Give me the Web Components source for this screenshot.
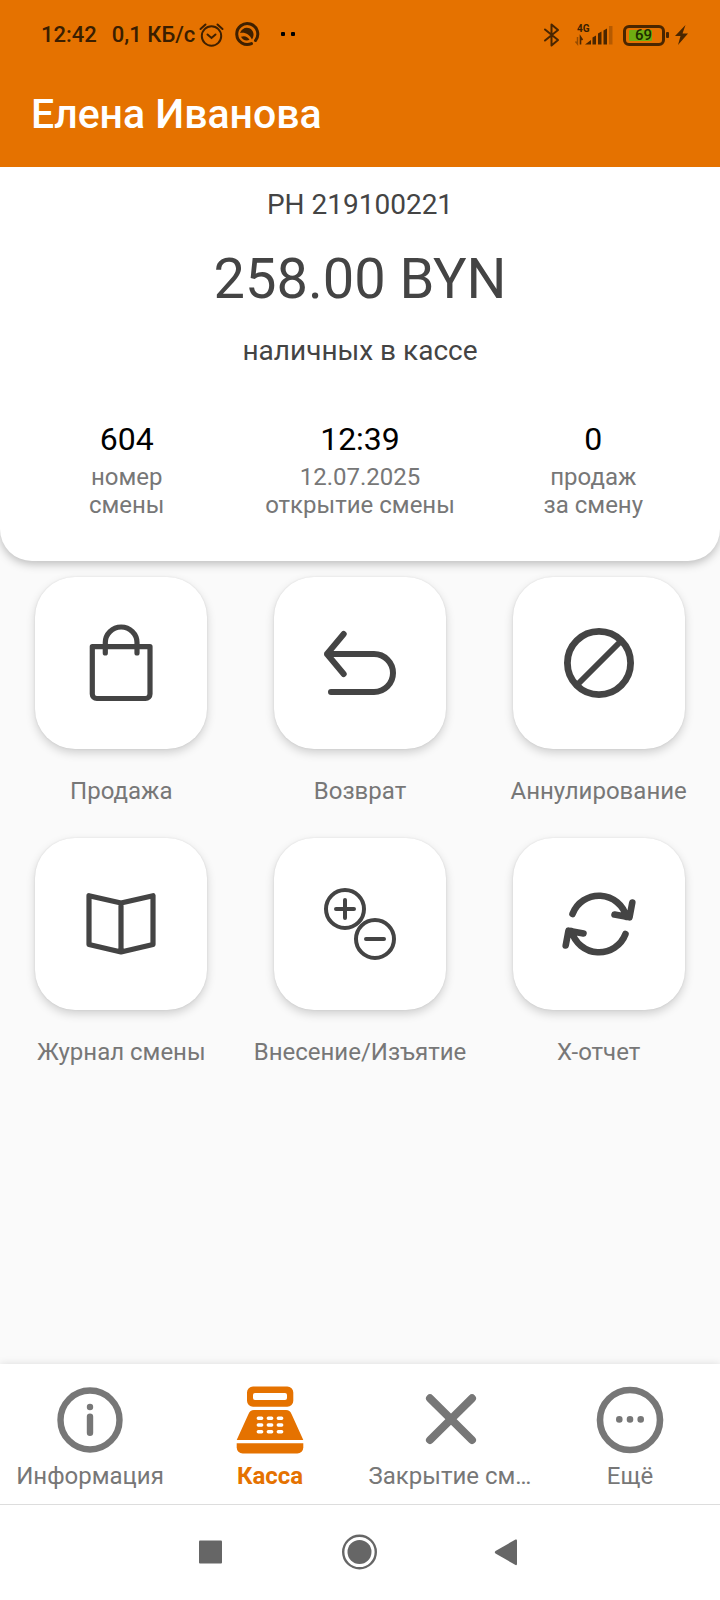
<!DOCTYPE html>
<html lang="ru">
<head>
<meta charset="utf-8">
<meta name="viewport" content="width=device-width, initial-scale=1">
<title>Касса</title>
<style>
  body { margin: 0; font-family: Roboto, "Noto Sans", sans-serif; background: #fafafa; color: #444; }
</style>
</head>
<body>
<cash-app></cash-app>
<script>
const define = (name, html) => {
  const template = document.createElement('template');
  template.innerHTML = html;
  customElements.define(name, class extends HTMLElement {
    constructor() {
      super();
      this.attachShadow({ mode: 'open' }).append(template.content.cloneNode(true));
    }
  });
};

define('status-bar', `
  <style>
    :host { display: flex; align-items: center; justify-content: space-between; height: 70px; padding: 0 32px 0 41px; box-sizing: border-box; color: #3a1e00; font-size: 22px; line-height: 26px; font-weight: 500; }
    .side { display: flex; align-items: center; }
    .rate { margin-left: 15px; }
    svg { display: block; flex: none; }
    .signal { display: flex; flex-direction: column; margin: 0 10px 0 14px; }
    .signal span { font-size: 10px; line-height: 10px; font-weight: 700; padding-left: 2px; }
    .battery { display: flex; align-items: center; }
    .cell { box-sizing: border-box; width: 42px; height: 21px; border: 3px solid #4a2600; border-radius: 6px; padding: 2px 10px 2px 3px; display: flex; }
    .level { flex: 1; background: #6fae12; color: #1c2c00; font-size: 15px; line-height: 11px; text-align: right; font-weight: 500; border-radius: 1px; }
    .tip { width: 3px; height: 6px; border-radius: 1px; background: #4a2600; margin: 0 6px 0 1px; }
  </style>
  <div class="side">
    <span>12:42</span><span class="rate">0,1 КБ/с</span>
    <svg width="104" height="30" viewBox="196 20 104 30" fill="none" stroke="#3f2000" stroke-width="2" stroke-linecap="round">
      <circle cx="212.500" cy="36" r="9.700"/>
      <path d="M208.500 34.500l4 3.500 4-3.500M201.500 29l5-4.500M223.500 29l-5-4.500"/>
      <path d="M256.500 40.500A10.500 10.500 0 1 0 252.500 43.600" stroke-width="3"/>
      <g fill="#3f2000" stroke="none">
        <path d="M241 33C242.500 28.500 247 26.500 250.500 28.300C254.500 30.300 256 35 253 39.500C250.500 34.500 246.500 32 241 33Z"/>
        <path d="M242 36.800C245.500 35.300 248.500 36.500 250.500 39.800C247 41.300 243.500 40 242 36.800Z"/>
      </g>
      <g fill="#000" stroke="none"><rect x="282" y="32" width="4" height="4" rx="1"/><rect x="292" y="32" width="4" height="4" rx="1"/></g>
    </svg>
  </div>
  <div class="side">
    <svg width="18" height="26" viewBox="0 0 18 26" fill="none" stroke="#4a2600" stroke-width="2" stroke-linecap="round" stroke-linejoin="round"><path d="M2 7.500L15 18 8.500 23.500V2.500L15 8 2 18.500"/></svg>
    <div class="signal"><span>4G</span>
      <svg width="38" height="12" viewBox="0 0 38 12" overflow="visible" fill="#4a2600"><path d="M10 10.500L16 6V10.500ZM17.500 10.500V3.500L21 1.500V10.500ZM23 10.500V-0.500L26.500-2.500V10.500ZM28.500 10.500V-3.500L32-5.500V10.500Z"/><path d="M34-8h3.500v18.500H34z" opacity=".3"/><path d="M2.500 3v7L0.500 7.500" fill="none" stroke="#4a2600" stroke-opacity=".5" stroke-width="1.400"/><path d="M5.500 10.500V3l2 3" fill="none" stroke="#4a2600" stroke-width="1.600"/></svg>
    </div>
    <div class="battery"><div class="cell"><span class="level">69</span></div><div class="tip"></div></div>
    <svg width="13" height="20" viewBox="0 0 13 20" fill="#4a2600"><path d="M10.500 0L0 11h5.500L3 20 13 8.500H7.500z"/></svg>
  </div>
`);

define('app-header', `
  <style>
    :host { display: block; background: #e57200; color: #fff; }
    h1 { margin: 0; padding: 20px 31px 29px; font-size: 41px; line-height: 48px; font-weight: 500; }
  </style>
  <status-bar></status-bar>
  <h1><slot></slot></h1>
`);

define('shift-stat', `
  <style>
    :host { display: block; text-align: center; color: #777; font-size: 24px; line-height: 28px; }
    .value { color: #000; font-size: 32px; line-height: 38px; margin-bottom: 5px; }
  </style>
  <div class="value"><slot name="value"></slot></div>
  <slot></slot>
`);

define('cash-summary', `
  <style>
    :host { display: block; background: #fff; border-radius: 0 0 32px 32px; box-shadow: 0 3px 10px rgba(0,0,0,.25); padding: 22px 10px 42px; text-align: center; font-size: 28px; line-height: 32px; }
    .amount { font-size: 56px; line-height: 64px; margin: 26px 0 24px; }
    .stats { display: grid; grid-template-columns: repeat(3, 1fr); margin-top: 53px; }
  </style>
  <div>РН 219100221</div>
  <div class="amount">258.00 BYN</div>
  <div>наличных в кассе</div>
  <div class="stats">
    <shift-stat><span slot="value">604</span>номер<br>смены</shift-stat>
    <shift-stat><span slot="value">12:39</span>12.07.2025<br>открытие смены</shift-stat>
    <shift-stat><span slot="value">0</span>продаж<br>за смену</shift-stat>
  </div>
`);

define('action-tile', `
  <style>
    :host { display: block; }
    button { display: flex; flex-direction: column; align-items: center; gap: 28px; width: 100%; padding: 0; border: 0; background: none; color: #777; font: inherit; font-size: 24px; line-height: 28px; white-space: nowrap; cursor: pointer; }
    .tile { display: flex; align-items: center; justify-content: center; width: 172px; height: 172px; border-radius: 40px; background: #fff; box-shadow: 0 4px 10px rgba(0,0,0,.17), 0 0 2px rgba(0,0,0,.1); color: #444; }
  </style>
  <button type="button"><span class="tile"><slot name="icon"></slot></span><slot></slot></button>
`);

define('action-grid', `
  <style>
    :host { display: grid; grid-template-columns: repeat(3, minmax(0, 1fr)); row-gap: 33px; padding: 16px 2px; }
    svg { display: block; fill: none; stroke: currentColor; stroke-width: 6; stroke-linecap: round; stroke-linejoin: round; }
  </style>
  <action-tile><svg slot="icon" width="88" height="88" viewBox="0 0 88 88" style="stroke-width:5.200"><path d="M15.300 27.600H73V75a4.500 4.500 0 0 1-4.500 4.500H19.800a4.500 4.500 0 0 1-4.500-4.500ZM28.300 34V23.500a15.850 15.500 0 0 1 31.700 0V34"/></svg>Продажа</action-tile>
  <action-tile><svg slot="icon" width="88" height="88" viewBox="0 0 88 88"><path d="M27.700 15L11 35l16.700 20M11 35H58a19 19 0 0 1 0 38H15"/></svg>Возврат</action-tile>
  <action-tile><svg slot="icon" width="88" height="88" viewBox="0 0 88 88"><circle cx="44" cy="44" r="31.600" stroke-width="6.800"/><path d="M66 22L22 66"/></svg>Аннулирование</action-tile>
  <action-tile><svg slot="icon" width="88" height="88" viewBox="0 0 88 88" style="stroke-width:5.200"><path d="M12 15.700L44 23l32-7.300V64.500L44 72 12 64.500ZM44 23V72"/></svg>Журнал смены</action-tile>
  <action-tile><svg slot="icon" width="88" height="88" viewBox="0 0 88 88" style="stroke-width:4"><circle cx="29" cy="29" r="19"/><circle cx="59" cy="59" r="19"/><path d="M20 29H38M29 20V38M50 59H68"/></svg>Внесение/Изъятие</action-tile>
  <action-tile><svg slot="icon" width="88" height="88" viewBox="0 0 88 88" style="stroke-width:6.600"><path d="M17.500 34A28.300 28.300 0 0 1 71.400 37M77.300 22.500L74.500 37.300 59.500 34.500M70.500 54A28.300 28.300 0 0 1 16.600 51M10.700 65.500L13.500 50.700 28.500 53.500"/></svg>Х-отчет</action-tile>
`);

define('nav-tab', `
  <style>
    :host { display: block; color: #777; }
    :host([active]) { color: #e57200; font-weight: 700; }
    button { display: flex; flex-direction: column; align-items: center; gap: 6px; width: 100%; padding: 20px 0 14px; border: 0; background: none; color: inherit; font: inherit; font-size: 24px; line-height: 28px; white-space: nowrap; cursor: pointer; }
  </style>
  <button type="button"><slot name="icon"></slot><slot></slot></button>
`);

define('tab-bar', `
  <style>
    :host { display: block; background: #fff; box-shadow: 0 0 8px rgba(0,0,0,.12); }
    nav { display: grid; grid-template-columns: repeat(4, minmax(0, 1fr)); }
    svg { display: block; fill: none; stroke: currentColor; stroke-linecap: round; stroke-linejoin: round; }
  </style>
  <nav>
    <nav-tab><svg slot="icon" width="72" height="72" viewBox="0 0 72 72" stroke-width="6.400"><circle cx="36" cy="36" r="29.500"/><path d="M36 32.600V48.800M36 23v.01"/></svg>Информация</nav-tab>
    <nav-tab active><svg slot="icon" width="72" height="72" viewBox="0 0 72 72"><g fill="currentColor" stroke="none"><path fill-rule="evenodd" d="M19 2.600H53.300a6 6 0 0 1 6 6V16.700a6 6 0 0 1-6 6H19a6 6 0 0 1-6-6V8.600a6 6 0 0 1 6-6ZM21 9a2 2 0 0 0-2 2v3a2 2 0 0 0 2 2H51a2 2 0 0 0 2-2V11a2 2 0 0 0-2-2Z"/><path d="M20 26H52q4 0 5.500 4L69.300 56H2.700L14.500 30Q16 26 20 26Z"/><path d="M2.700 59.200H69.300V63.500a6 6 0 0 1-6 6H8.700a6 6 0 0 1-6-6Z"/></g><path stroke="#fff" stroke-width="3.400" d="M24.300 34.300h3.400M34.300 34.300h3.400M44.300 34.300h3.400M24.300 41h3.400M34.300 41h3.400M44.300 41h3.400M24.300 47.700h3.400M34.300 47.700h3.400M44.300 47.700h3.400"/></svg>Касса</nav-tab>
    <nav-tab><svg slot="icon" width="72" height="72" viewBox="0 0 72 72" stroke-width="8"><path d="M16 14.300L58 56M58 14.300L16 56"/></svg>Закрытие см…</nav-tab>
    <nav-tab><svg slot="icon" width="72" height="72" viewBox="0 0 72 72" stroke-width="6.600"><circle cx="36" cy="36" r="30"/><path d="M25.300 35.400v.01M36 35.400v.01M46.700 35.400v.01"/></svg>Ещё</nav-tab>
  </nav>
`);

define('system-bar', `
  <style>
    :host { display: flex; justify-content: center; gap: 102px; padding: 23px 0 24px; background: #fff; border-top: 1px solid #ddd; }
    button { padding: 0; border: 0; background: none; color: #666; cursor: pointer; }
    svg { display: block; fill: currentColor; }
  </style>
  <button type="button" aria-label="Недавние"><svg width="48" height="48" viewBox="0 0 48 48"><rect x="13" y="12.500" width="23" height="23" rx="1"/></svg></button>
  <button type="button" aria-label="Домой"><svg width="48" height="48" viewBox="0 0 48 48"><circle cx="23.500" cy="24" r="12"/><circle cx="23.500" cy="24" r="16.300" fill="none" stroke="currentColor" stroke-width="2.400"/></svg></button>
  <button type="button" aria-label="Назад"><svg width="48" height="48" viewBox="0 0 48 48"><path d="M9.500 23L29.500 11.500Q31 11 31 12.500V36Q31 37.500 29.500 37L9.500 25.500Q8 24.300 9.500 23Z"/></svg></button>
`);

define('cash-app', `
  <style>
    :host { display: flex; flex-direction: column; min-height: 100vh; }
    main { flex: 1; }
    app-header { position: relative; z-index: 1; }
  </style>
  <app-header>Елена Иванова</app-header>
  <main>
    <cash-summary></cash-summary>
    <action-grid></action-grid>
  </main>
  <tab-bar></tab-bar>
  <system-bar></system-bar>
`);
</script>
</body>
</html>
